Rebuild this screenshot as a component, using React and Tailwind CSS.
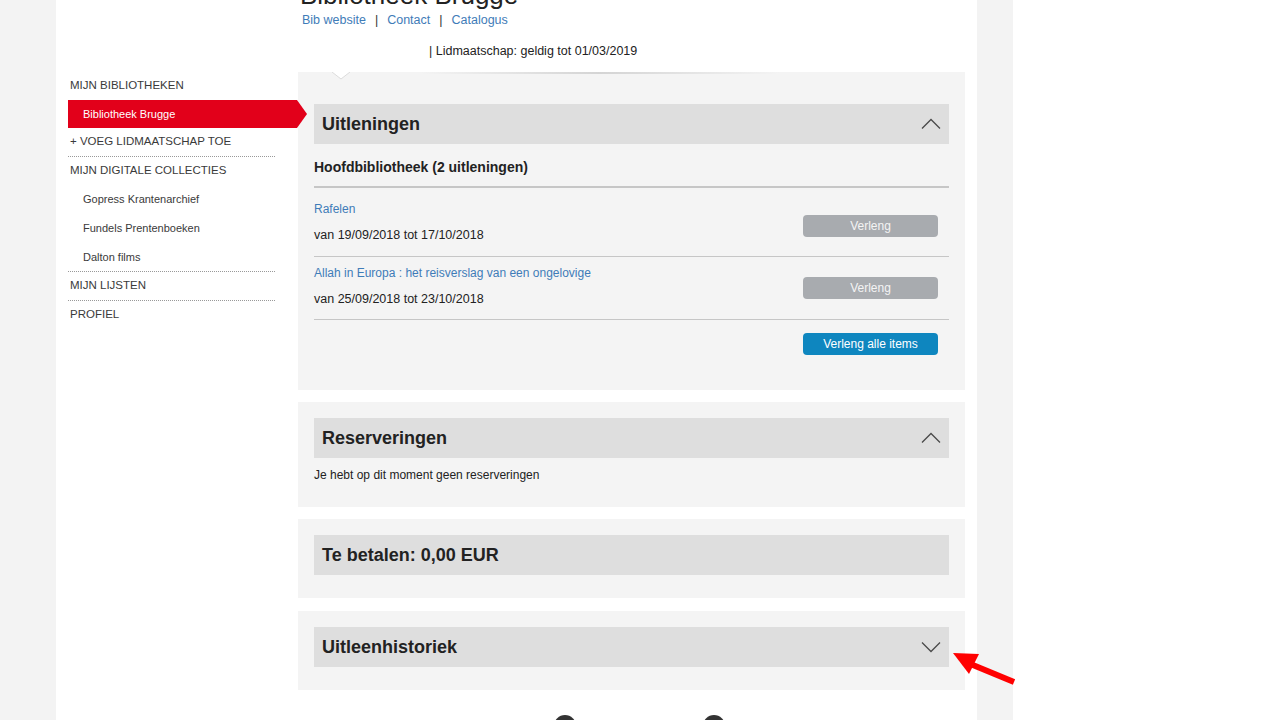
import React from "react";

const Chevron = ({ down }) => (
  <svg width="22" height="12" viewBox="0 0 22 12" fill="none">
    {down ? (
      <polyline points="2,1.5 11,10.5 20,1.5" stroke="#4a4a4a" strokeWidth="1.3" />
    ) : (
      <polyline points="2,10.5 11,1.5 20,10.5" stroke="#4a4a4a" strokeWidth="1.3" />
    )}
  </svg>
);

const Header = ({ title, chevron }) => (
  <div className="h-[40px] bg-[#dedede] flex items-center justify-between pl-[8px] pr-[7px]">
    <span className="text-[18px] font-bold text-[#222]">{title}</span>
    {chevron ? <Chevron down={chevron === "down"} /> : null}
  </div>
);

export default function App() {
  return (
    <div
      className="relative w-[1280px] h-[720px] overflow-hidden bg-white flex"
      style={{ fontFamily: '"Liberation Sans", Arial, sans-serif' }}
    >
      <div className="w-[56px] shrink-0 bg-[#f3f3f3]" />
      <div className="w-[921px] shrink-0 bg-white flex flex-col">
        {/* page header */}
        <div className="h-[72px] shrink-0 pl-[244px] flex flex-col">
          <div className="text-[26px] leading-[26px] mt-[-18px] text-[#222]">Bibliotheek Brugge</div>
          <div className="mt-[4px] ml-[2px] text-[12.5px] leading-[16px] text-[#3f7cb8] flex">
            <span>Bib website</span>
            <span className="text-[#333] mx-[9px]">|</span>
            <span>Contact</span>
            <span className="text-[#333] mx-[9px]">|</span>
            <span>Catalogus</span>
          </div>
          <div className="mt-[15px] pl-[129px] text-[12.5px] leading-[16px] text-[#222]">
            | Lidmaatschap: geldig tot 01/03/2019
          </div>
        </div>

        <div className="flex shrink-0">
          {/* sidebar */}
          <div className="ml-[12px] w-[207px] shrink-0 flex flex-col text-[#3a3a3a]">
            <div className="h-[28px] flex items-center pl-[2px] text-[11.5px]">MIJN BIBLIOTHEKEN</div>
            <div className="relative z-10 w-[239px] h-[28px] bg-[#e2001a] flex items-center pl-[15px] text-[11px] text-white [clip-path:polygon(0_0,calc(100%_-_10px)_0,100%_50%,calc(100%_-_10px)_100%,0_100%)]">
              Bibliotheek Brugge
            </div>
            <div className="h-[29px] flex items-center pl-[2px] text-[11.5px] border-b border-dotted border-[#999]">
              + VOEG LIDMAATSCHAP TOE
            </div>
            <div className="h-[28px] flex items-center pl-[2px] text-[11.5px]">MIJN DIGITALE COLLECTIES</div>
            <div className="h-[29px] flex items-center pl-[15px] text-[11px]">Gopress Krantenarchief</div>
            <div className="h-[29px] flex items-center pl-[15px] text-[11px]">Fundels Prentenboeken</div>
            <div className="h-[29px] flex items-center pl-[15px] text-[11px] border-b border-dotted border-[#999]">
              Dalton films
            </div>
            <div className="h-[29px] flex items-center pl-[2px] text-[11.5px] border-b border-dotted border-[#999]">
              MIJN LIJSTEN
            </div>
            <div className="h-[28px] flex items-center pl-[2px] text-[11.5px]">PROFIEL</div>
          </div>

          {/* content */}
          <div className="ml-[23px] w-[667px] shrink-0 flex flex-col">
            <div className="relative bg-[#f4f4f4] h-[318px] pt-[32px] px-[16px]">
              <div className="absolute left-[122px] right-[185px] top-0 h-[2px] bg-gradient-to-r from-transparent via-[#d4d4d4] to-transparent" />
              <svg className="absolute left-[34px] top-0" width="18" height="9" viewBox="0 0 18 9">
                <polygon points="0,0 9,7 18,0" fill="#ffffff" />
                <polyline points="0,0 9,7 18,0" fill="none" stroke="#dcdcdc" strokeWidth="1" />
              </svg>
              <Header title="Uitleningen" chevron="up" />
              <div className="pt-[14px] pb-[10px] text-[14px] leading-[18px] font-bold text-[#222] border-b-2 border-[#c6c6c6]">
                Hoofdbibliotheek (2 uitleningen)
              </div>
              <div className="h-[69px] flex items-center justify-between border-b border-[#c6c6c6]">
                <div className="flex flex-col">
                  <span className="text-[12px] leading-[16px] text-[#3f7cb8]">Rafelen</span>
                  <span className="text-[12.5px] leading-[16px] text-[#222] mt-[10px]">van 19/09/2018 tot 17/10/2018</span>
                </div>
                <button className="w-[135px] h-[22px] rounded-[4px] bg-[#a8abaf] text-[12px] text-[#f4f4f4] mr-[11px] mt-[7px]">
                  Verleng
                </button>
              </div>
              <div className="h-[63px] flex items-center justify-between border-b border-[#c6c6c6]">
                <div className="flex flex-col mt-[-4px]">
                  <span className="text-[12px] leading-[16px] text-[#3f7cb8]">Allah in Europa : het reisverslag van een ongelovige</span>
                  <span className="text-[12.5px] leading-[16px] text-[#222] mt-[10px]">van 25/09/2018 tot 23/10/2018</span>
                </div>
                <button className="w-[135px] h-[22px] rounded-[4px] bg-[#a8abaf] text-[12px] text-[#f4f4f4] mr-[11px]">
                  Verleng
                </button>
              </div>
              <div className="flex justify-end pt-[13px]">
                <button className="w-[135px] h-[22px] rounded-[4px] bg-[#0e86bf] text-[12px] text-white mr-[11px]">
                  Verleng alle items
                </button>
              </div>
            </div>

            <div className="mt-[12px] bg-[#f4f4f4] h-[105px] pt-[16px] px-[16px]">
              <Header title="Reserveringen" chevron="up" />
              <div className="mt-[9px] text-[12px] leading-[16px] text-[#222]">
                Je hebt op dit moment geen reserveringen
              </div>
            </div>

            <div className="mt-[12px] bg-[#f4f4f4] h-[79px] pt-[16px] px-[16px]">
              <Header title="Te betalen: 0,00 EUR" />
            </div>

            <div className="mt-[13px] bg-[#f4f4f4] h-[79px] pt-[16px] px-[16px]">
              <Header title="Uitleenhistoriek" chevron="down" />
            </div>

            <div className="flex mt-[25px] pl-[256px] gap-[127px]">
              <div className="w-[22px] h-[22px] rounded-full bg-[#333]" />
              <div className="w-[22px] h-[22px] rounded-full bg-[#333]" />
            </div>
          </div>
        </div>
      </div>
      <div className="w-[36px] shrink-0 bg-[#f3f3f3]" />
      <div className="flex-1 bg-white" />

      {/* annotation arrow */}
      <svg className="absolute left-0 top-0 pointer-events-none" width="1280" height="720">
        <line x1="968" y1="663" x2="1014" y2="682" stroke="#ff0000" strokeWidth="6" />
        <polygon points="953,653 979,654 969,674" fill="#ff0000" />
      </svg>
    </div>
  );
}
